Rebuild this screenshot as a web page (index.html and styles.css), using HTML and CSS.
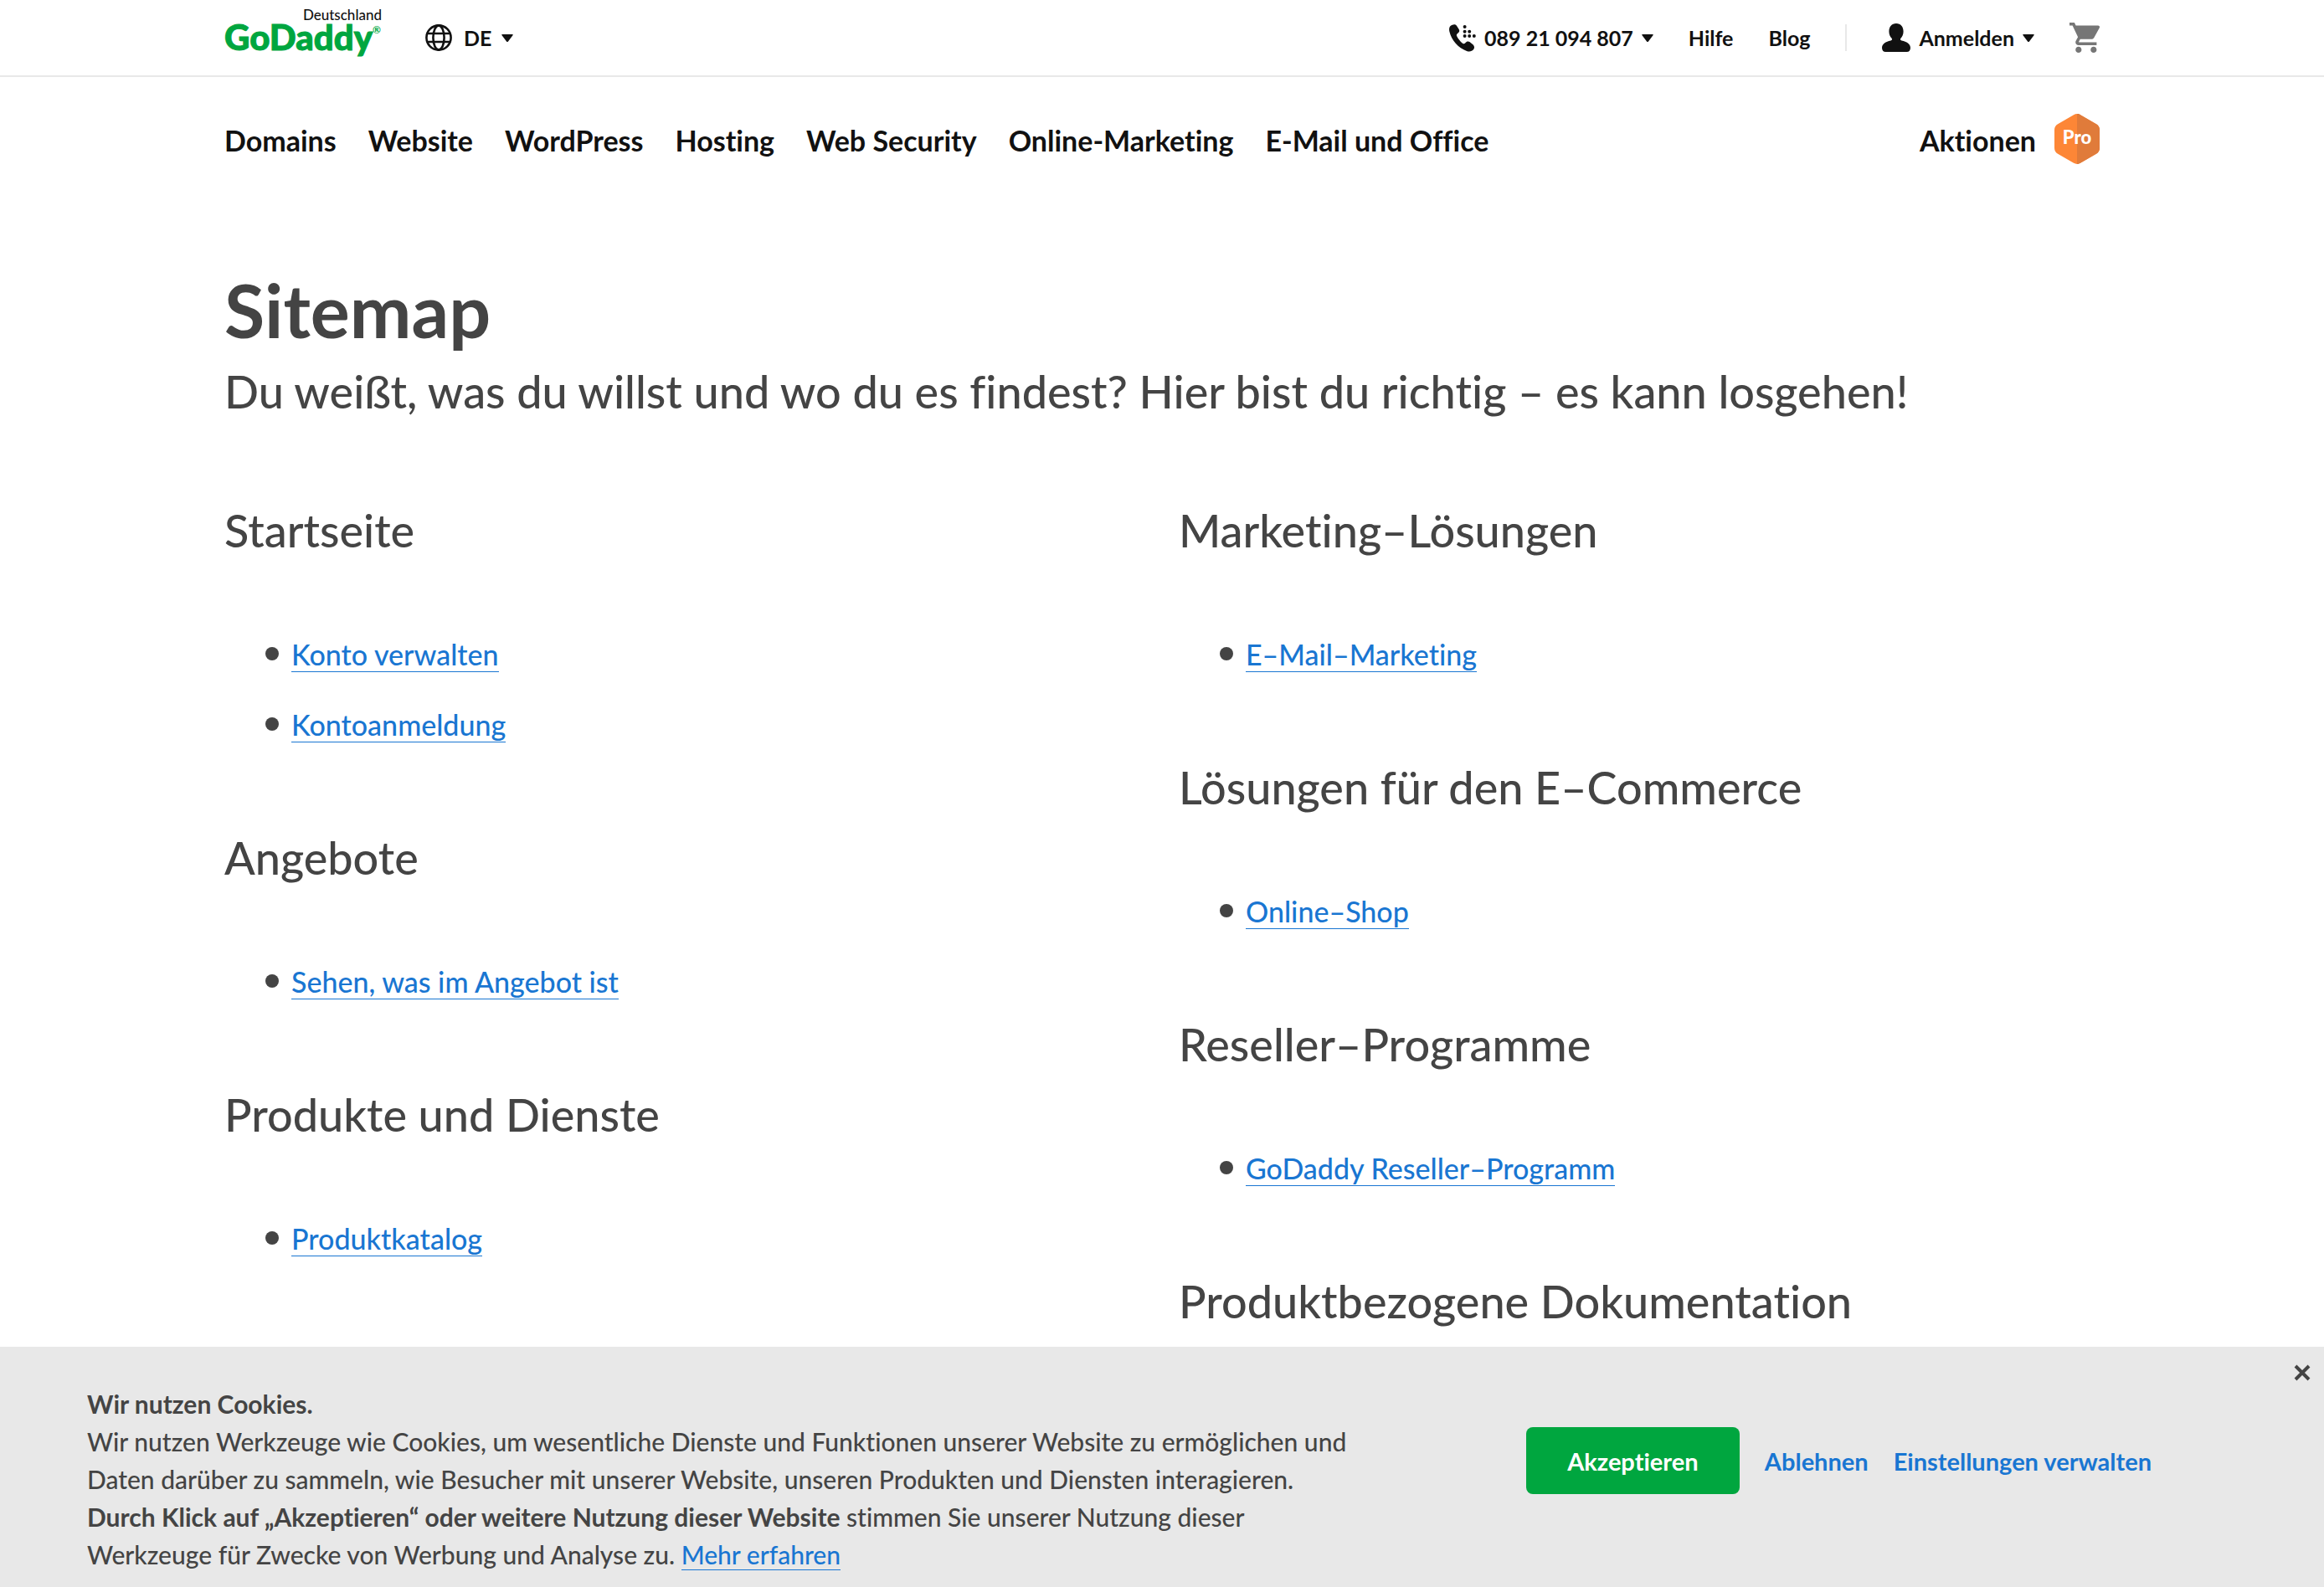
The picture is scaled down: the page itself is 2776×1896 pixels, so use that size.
FILE: index.html
```html
<!DOCTYPE html>
<html lang="de">
<head>
<meta charset="utf-8">
<meta name="viewport" content="width=device-width, initial-scale=1">
<title>Sitemap – GoDaddy DE</title>
<link rel="stylesheet" href="styles.css">
</head>
<body>
<header>
  <div class="topbar">
    <div class="container topbar-inner">
      <a class="logo" href="#">
        <span class="logo-country">Deutschland</span>
        <span class="logo-name">GoDaddy<sup class="logo-reg">®</sup></span>
      </a>
      <button class="tool language" type="button">
        <svg class="globe" viewBox="0 0 32 32" aria-hidden="true"><g fill="none" stroke="currentColor" stroke-width="2.6"><circle cx="16" cy="16" r="14.6"/><ellipse cx="16" cy="16" rx="6.6" ry="14.6"/><path d="M2.6 11h26.8M2.6 21h26.8"/></g></svg>
        <span>DE</span>
        <svg class="caret" viewBox="0 0 14 9" aria-hidden="true"><path d="M1 0h12q1.400 0 .6 1.100L8 8.400q-1 1-2 0L.4 1.100Q-.4 0 1 0z"/></svg>
      </button>
      <div class="topbar-right">
        <button class="tool phone" type="button">
          <svg class="phone-icon" viewBox="0 0 32 33" aria-hidden="true"><path d="M1.600 2C4 .2 7-.8 8.800 1.500l3 4.800c1 1.900 0 3.500-1.800 4.700-1.200 1-1.500 2-.8 3.300 1.700 3.300 4 6.200 6.800 8.400 1.300 1 2.400.8 3.400-.4 1.300-1.700 3.200-2.300 5-1.200l4 3.100c2 1.800 2 4.200.8 5.900-1.800 2.500-5.200 3-8.200 1.900C11 28.300 2.500 18.800.3 8.500-.3 5.800.2 3.200 1.600 2z"/><circle cx="18.600" cy="3" r="2"/><circle cx="18.600" cy="8.700" r="2"/><circle cx="24.200" cy="8.700" r="2"/><circle cx="18.600" cy="14" r="2"/><circle cx="24.200" cy="14" r="2"/><circle cx="29.800" cy="14" r="2"/></svg>
          <span>089 21 094 807</span>
          <svg class="caret" viewBox="0 0 14 9" aria-hidden="true"><path d="M1 0h12q1.400 0 .6 1.100L8 8.400q-1 1-2 0L.4 1.100Q-.4 0 1 0z"/></svg>
        </button>
        <a class="tool" href="#">Hilfe</a>
        <a class="tool" href="#">Blog</a>
        <span class="divider"></span>
        <button class="tool account" type="button">
          <svg class="person" viewBox="0 0 34 34" aria-hidden="true"><path d="M17 0c5.400 0 8.600 4 8.600 9.500 0 3.600-1.200 6.500-3.400 8.500-.6 1.400-.2 2 1.300 2.400C29.500 21.500 34 24.500 34 29c0 3-1.500 5-4.500 5h-25C1.500 34 0 32 0 29c0-4.500 4.500-7.500 10.500-8.600 1.500-.4 1.900-1 1.300-2.400-2.200-2-3.400-4.900-3.400-8.500C8.400 4 11.600 0 17 0z"/></svg>
          <span>Anmelden</span>
          <svg class="caret" viewBox="0 0 14 9" aria-hidden="true"><path d="M1 0h12q1.400 0 .6 1.100L8 8.400q-1 1-2 0L.4 1.100Q-.4 0 1 0z"/></svg>
        </button>
        <a class="cart" href="#" aria-label="Warenkorb">
          <svg class="cart-icon" viewBox="1 2 20 20" aria-hidden="true"><path d="M7 18c-1.100 0-1.990.9-1.990 2S5.900 22 7 22s2-.9 2-2-.9-2-2-2zM1 2v2h2l3.600 7.590-1.350 2.450c-.16.280-.25.610-.25.960 0 1.100.9 2 2 2h12v-2H7.420c-.14 0-.25-.11-.25-.25l.03-.12.900-1.630h7.450c.75 0 1.410-.41 1.750-1.030l3.580-6.490c.08-.14.120-.31.120-.48 0-.55-.45-1-1-1H5.210l-.94-2H1zm16 16c-1.100 0-1.990.9-1.990 2s.89 2 1.990 2 2-.9 2-2-.9-2-2-2z"/></svg>
        </a>
      </div>
    </div>
  </div>
  <nav class="container mainnav">
    <a href="#">Domains</a>
    <a href="#">Website</a>
    <a href="#">WordPress</a>
    <a href="#">Hosting</a>
    <a href="#">Web Security</a>
    <a href="#">Online-Marketing</a>
    <a href="#">E-Mail und Office</a>
    <a class="deals" href="#">Aktionen</a>
    <a class="pro" href="#">
      <svg class="pro-badge" viewBox="0 0 54 60" aria-hidden="true"><path fill="#fd8636" d="M23 1.200q4-2.200 8 0l19 11q4 2.300 4 7v21.600q0 4.700-4 7l-19 11q-4 2.200-8 0l-19-11q-4-2.300-4-7V19.200q0-4.700 4-7z"/><path fill="#e07b3a" d="M27-.4q2 0 4 1.600l19 11q4 2.300 4 7v21.600q0 4.700-4 7l-19 11q-2 1.200-4 1.200z"/></svg>
      <span class="pro-label">Pro</span>
    </a>
  </nav>
</header>
<main class="container">
  <h1>Sitemap</h1>
  <p class="lead">Du weißt, was du willst und wo du es findest? Hier bist du richtig – es kann losgehen!</p>
  <div class="columns">
    <div>
      <section><h2>Startseite</h2><ul><li><a href="#">Konto verwalten</a></li><li><a href="#">Kontoanmeldung</a></li></ul></section>
      <section><h2>Angebote</h2><ul><li><a href="#">Sehen, was im Angebot ist</a></li></ul></section>
      <section><h2>Produkte und Dienste</h2><ul><li><a href="#">Produktkatalog</a></li></ul></section>
    </div>
    <div>
      <section><h2>Marketing–Lösungen</h2><ul><li><a href="#">E–Mail–Marketing</a></li></ul></section>
      <section><h2>Lösungen für den E–Commerce</h2><ul><li><a href="#">Online–Shop</a></li></ul></section>
      <section><h2>Reseller–Programme</h2><ul><li><a href="#">GoDaddy Reseller–Programm</a></li></ul></section>
      <section><h2>Produktbezogene Dokumentation</h2></section>
    </div>
  </div>
</main>
<aside class="cookies" aria-label="Cookies">
  <div class="cookie-text">
    <strong>Wir nutzen Cookies.</strong><br>
    Wir nutzen Werkzeuge wie Cookies, um wesentliche Dienste und Funktionen unserer Website zu ermöglichen und<br>
    Daten darüber zu sammeln, wie Besucher mit unserer Website, unseren Produkten und Diensten interagieren.<br>
    <strong>Durch Klick auf „Akzeptieren“ oder weitere Nutzung dieser Website</strong> stimmen Sie unserer Nutzung dieser<br>
    Werkzeuge für Zwecke von Werbung und Analyse zu. <a href="#">Mehr erfahren</a>
  </div>
  <div class="cookie-actions">
    <button class="accept" type="button">Akzeptieren</button>
    <button class="plain" type="button">Ablehnen</button>
    <button class="plain" type="button">Einstellungen verwalten</button>
  </div>
  <button class="close" type="button" aria-label="Schließen"><svg class="close-icon" viewBox="0 0 20 20" aria-hidden="true"><path d="M2 2l16 16M18 2L2 18" stroke="currentColor" stroke-width="4"/></svg></button>
</aside>
</body>
</html>
```
FILE: styles.css
```css
* { box-sizing: border-box; }

body {
  margin: 0;
  background: #fff;
  color: #444;
  font-family: Lato, "Open Sans", sans-serif;
  font-weight: 500;
  font-variant-ligatures: none;
}

a { color: inherit; text-decoration: none; }

button {
  padding: 0;
  border: 0;
  background: none;
  color: inherit;
  font: inherit;
  font-variant-ligatures: none;
  cursor: pointer;
}

svg { display: block; fill: currentColor; }

.container { margin: 0 268px; }

/* Top bar */
.topbar { border-bottom: 2px solid #e8e8e8; color: #111; }

.topbar-inner { display: flex; align-items: center; height: 90px; }

.logo { display: flex; flex-direction: column; width: 188px; height: 74px; }
.logo-country { align-self: flex-end; font-size: 17px; line-height: 20px; }
.logo-name { color: #00a63f; font-size: 42px; font-weight: 900; line-height: 32px; white-space: nowrap; -webkit-text-stroke: 1px #00a63f; }
.logo-reg { font-size: 12px; font-weight: 700; line-height: 0; vertical-align: 20px; -webkit-text-stroke: 0; }

.tool { display: flex; align-items: center; font-size: 25px; font-weight: 700; line-height: 32px; white-space: nowrap; }
.language { margin-left: 52px; gap: 12px; }
.globe { width: 32px; height: 32px; margin-right: 2px; }
.caret { width: 14px; height: 9px; }

.topbar-right { display: flex; align-items: center; gap: 42px; margin-left: auto; }
.phone, .account { gap: 10px; }
.phone-icon { width: 32px; height: 33px; }
.divider { width: 2px; height: 32px; background: #e8e8e8; }
.person { width: 34px; height: 34px; }
.cart { color: #767676; }
.cart-icon { width: 36px; height: 36px; }

/* Main navigation */
.mainnav {
  display: flex;
  align-items: center;
  gap: 38px;
  height: 148px;
  color: #111;
  font-size: 34px;
  font-weight: 700;
  line-height: 44px;
  white-space: nowrap;
}
.mainnav > a { padding-top: 4px; }
.deals { margin-left: auto; }
.mainnav > .pro { position: relative; margin-left: -16px; padding: 0; }
.pro-badge { width: 54px; height: 60px; }
.pro-label {
  position: absolute;
  inset: 0;
  color: #fff;
  font-size: 22px;
  font-weight: 900;
  line-height: 56px;
  text-align: center;
}

/* Sitemap */
h1 { margin: 84px 0 0; font-size: 88px; font-weight: 700; line-height: 92px; }
.lead { margin: 16px 0 0; font-size: 54px; line-height: 72px; }
.columns { display: grid; grid-template-columns: 1fr 1fr; gap: 40px; margin-top: 98px; }
section { margin-bottom: 103px; }
h2 { margin: 0; font-size: 54px; font-weight: 500; line-height: 64px; }
ul { display: flex; flex-direction: column; gap: 36px; margin: 0; padding: 92px 0 0 80px; list-style: none; }
li { position: relative; height: 48px; font-size: 34px; line-height: 48px; }
li::before {
  content: "";
  position: absolute;
  left: -31px;
  top: 15px;
  width: 16px;
  height: 16px;
  border-radius: 50%;
  background: #444;
}
li a, .cookie-text a { color: #1976d2; border-bottom: 1px solid; }

/* Cookie banner */
.cookies {
  position: fixed;
  inset: auto 0 0;
  display: flex;
  align-items: flex-start;
  justify-content: space-between;
  padding: 46px 206px 16px 104px;
  background: #e8e8e8;
}
.cookie-text { font-size: 30px; line-height: 45px; white-space: nowrap; }
.cookie-actions { display: flex; align-items: center; gap: 30px; margin-top: 50px; font-size: 29px; font-weight: 700; white-space: nowrap; }
.accept { width: 255px; height: 80px; border-radius: 8px; background: #00a63f; color: #fff; }
.plain { color: #1976d2; }
.close { position: absolute; top: 21px; right: 16px; }
.close-icon { width: 20px; height: 20px; }
```
